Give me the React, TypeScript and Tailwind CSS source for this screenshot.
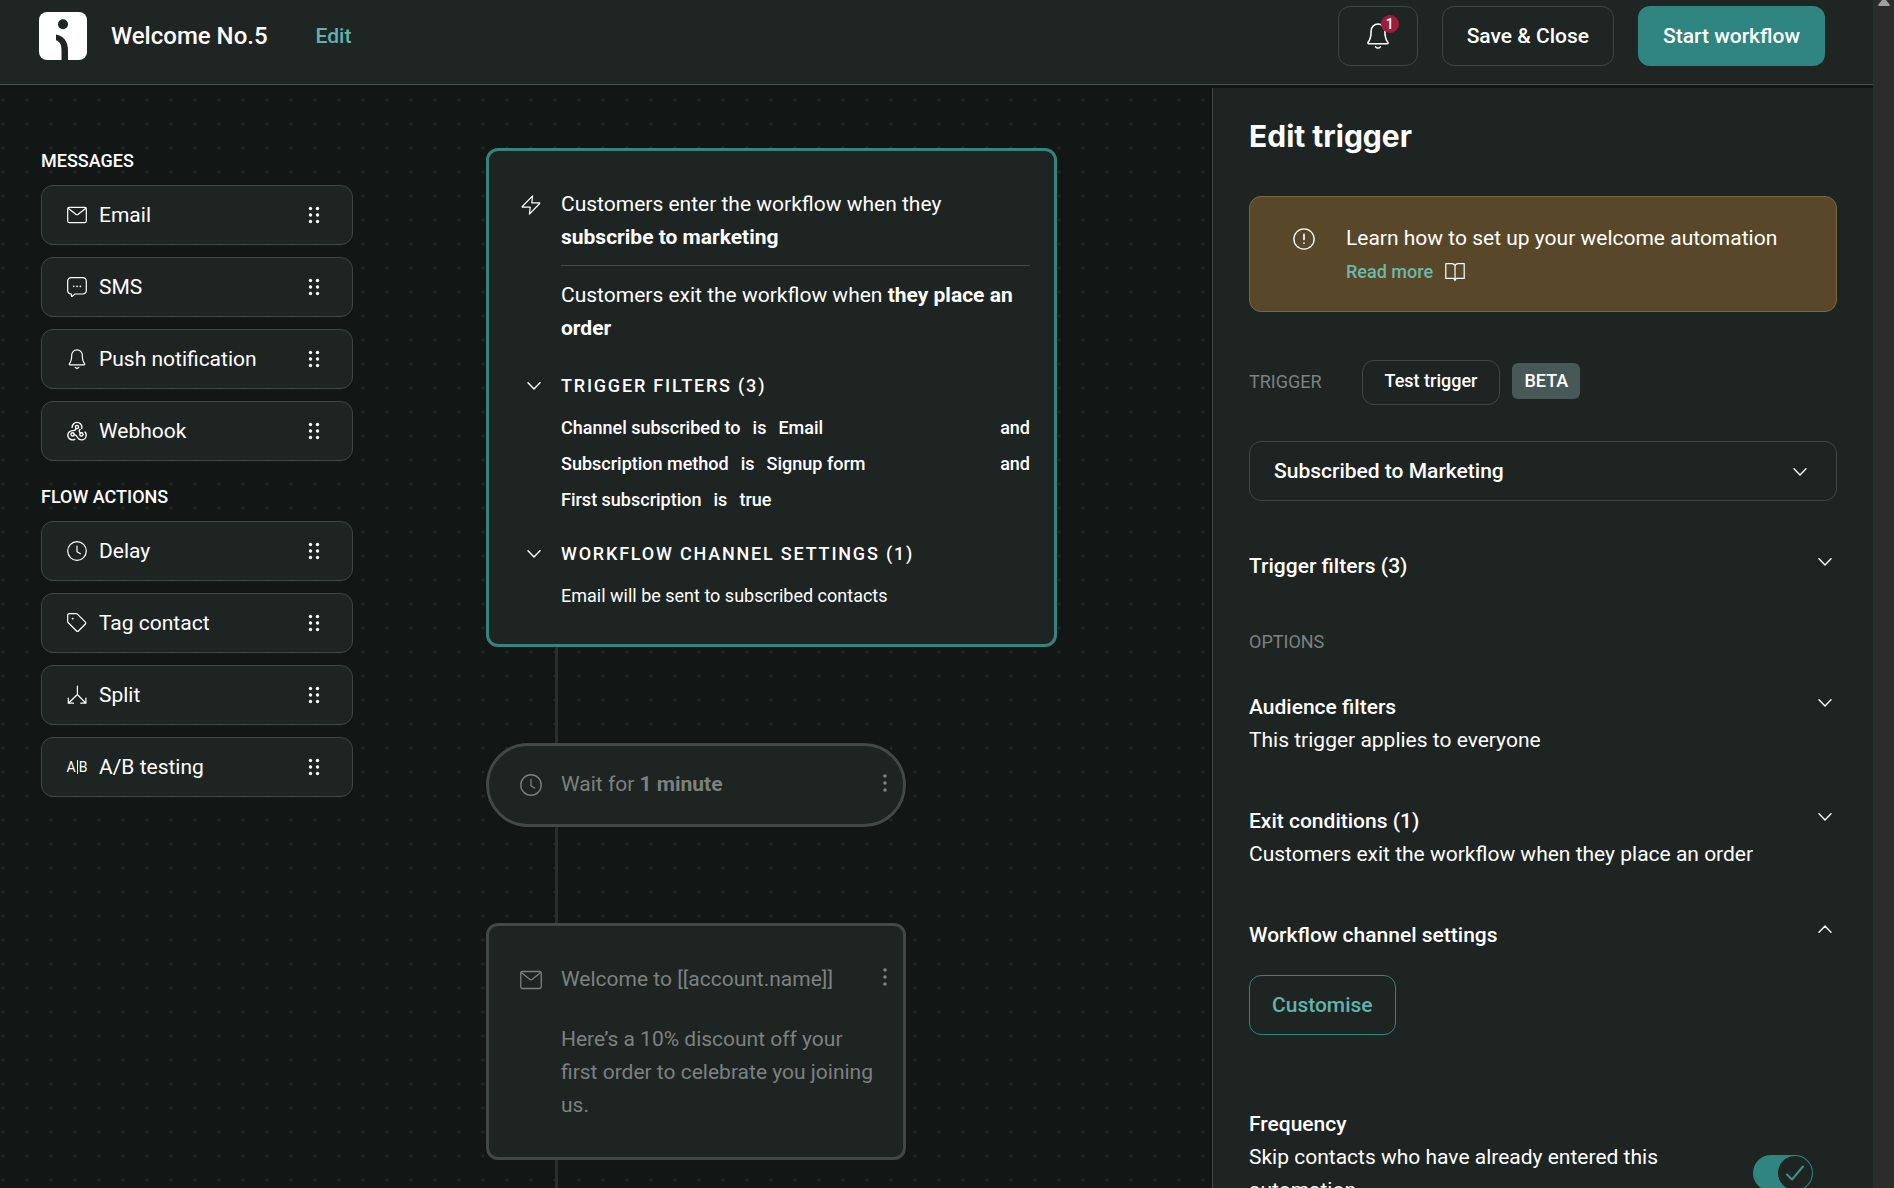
import type { ReactNode } from "react";

type IconProps = { className?: string };

function Svg({ className = "size-5", children }: IconProps & { children: ReactNode }) {
  return (
    <svg
      viewBox="0 0 20 20"
      className={`shrink-0 ${className}`}
      fill="none"
      stroke="currentColor"
      strokeWidth="1.2"
      strokeLinecap="round"
      strokeLinejoin="round"
      aria-hidden="true"
    >
      {children}
    </svg>
  );
}

const MailIcon = ({ className }: IconProps) => (
  <Svg className={className}>
    <rect x="0.7" y="2.3" width="18.6" height="15.4" rx="1.6" />
    <path d="M1.2 3.2l7.6 6.1a2 2 0 0 0 2.4 0l7.6-6.1" />
  </Svg>
);

const SmsIcon = ({ className }: IconProps) => (
  <Svg className={className}>
    <path d="M4 17A3.3 3.3 0 0 1 .7 13.700V4A3.300 3.300 0 0 1 4 .700h12A3.300 3.300 0 0 1 19.300 4v9.700a3.300 3.300 0 0 1-3.300 3.300H8L5.200 19.400c-.3.200-.7.100-.7-.300L4.300 17z" />
    <path d="M6.700 9.300h.1M10 9.300h.1M13.300 9.300h.1" strokeWidth="1.700" />
  </Svg>
);

const BellIcon = ({ className }: IconProps) => (
  <Svg className={className}>
    <path d="M10 .8a5.300 5.300 0 0 0-5.300 5.300c0 4.700-.7 6.800-2.200 8.500-.5.600-.2 1.300.5 1.300h14c.7 0 1-.7.5-1.300-1.500-1.700-2.200-3.800-2.200-8.500A5.300 5.300 0 0 0 10 .8z" />
    <path d="M8.200 18.300c.4.700 1 1 1.800 1s1.400-.3 1.800-1" />
  </Svg>
);

const WebhookIcon = ({ className }: IconProps) => (
  <Svg className={className}>
    <g strokeWidth="1.4">
      <circle cx="10" cy="6" r="1.600" />
      <circle cx="5.600" cy="13.400" r="1.600" />
      <circle cx="14.400" cy="13.400" r="1.600" />
      <path d="M5.100 6.400A4.900 4.900 0 0 1 14.900 6.200c0 .5-.1 1-.2 1.400M9.200 7.400c-.3 1.800-1.600 2.300-3.500 2.200A4.700 4.700 0 0 0 .8 14.300a4.700 4.700 0 0 0 4.900 4.600c.8 0 1.500-.2 2.100-.5M7.200 13.600c2.300.2 2.400 1.500 3.400 3.100 1 1.500 2.400 2.200 4 2.200a4.700 4.700 0 0 0 4.600-4.700c0-1.200-.4-2.300-1.200-3.100M13.500 12c-1.500-1-1.600-2.100-.5-3.600" />
    </g>
  </Svg>
);

const ClockIcon = ({ className }: IconProps) => (
  <Svg className={className}>
    <circle cx="10" cy="10" r="9.300" />
    <path d="M10 5v5.800l3.400 1.900" />
  </Svg>
);

const TagIcon = ({ className }: IconProps) => (
  <Svg className={className}>
    <path d="M.7 2A1.300 1.300 0 0 1 2 .7h7.200c.5 0 .9.200 1.200.5l8 8c.5.500.5 1.300 0 1.800l-7 7c-.5.500-1.300.5-1.800 0l-8.300-8.200A2 2 0 0 1 .7 8.500z" />
    <path d="M5.600 5.600h.1" strokeWidth="1.900" />
  </Svg>
);

const SplitIcon = ({ className }: IconProps) => (
  <Svg className={className}>
    <path d="M10.400 1v8.500L1.600 18M10.400 9.500l8.200 8.500M1.300 13v5.200h5.200M18.900 13v5.200h-5.200" />
  </Svg>
);

const ZapIcon = ({ className }: IconProps) => (
  <Svg className={className}>
    <path d="M11.600.8L1.300 11.500c-.3.300-.1.700.3.700h7.600l-.8 7L18.700 8.500c.3-.3.100-.7-.3-.7h-7.600z" />
  </Svg>
);

const AlertIcon = ({ className }: IconProps) => (
  <Svg className={className}>
    <circle cx="10" cy="10" r="9.200" />
    <path d="M10 5.800v4.700M10 13.700v.1" strokeWidth="1.500" />
  </Svg>
);

const BookIcon = ({ className }: IconProps) => (
  <Svg className={className}>
    <path d="M10 3.500C9.300 2 8 1.600 6.800 1.600H.8v14.800H8c1.100 0 2 .9 2 2.200 0-1.300.9-2.200 2-2.200h7.200V1.600h-6C12 1.600 10.700 2 10 3.500zM10 3.500v15" />
  </Svg>
);

const ChevronIcon = ({ className = "" }: IconProps) => (
  <svg
    viewBox="0 0 14 8"
    className={`h-2 w-3.5 shrink-0 ${className}`}
    fill="none"
    stroke="currentColor"
    strokeWidth="1.400"
    strokeLinecap="round"
    strokeLinejoin="round"
    aria-hidden="true"
  >
    <path d="M1 .8l6 6.200L13 .8" />
  </svg>
);

const AbIcon = () => (
  <span aria-hidden="true" className="flex w-5 shrink-0 items-center justify-center gap-px text-sm leading-5">
    A<span className="h-3.5 w-px shrink-0 bg-white" />B
  </span>
);

const GripIcon = () => (
  <svg viewBox="0 0 12 18" className="h-[18px] w-3 shrink-0" fill="currentColor" aria-hidden="true">
    {[2.500, 9, 15.500].map((y) => (
      <g key={y}>
        <circle cx="2.500" cy={y} r="1.700" />
        <circle cx="9.500" cy={y} r="1.700" />
      </g>
    ))}
  </svg>
);

const KebabButton = ({ label }: { label: string }) => (
  <button type="button" aria-label={label} className="mb-1 flex h-7 w-4 shrink-0 items-center justify-center">
    <svg viewBox="0 0 4 18" className="h-[18px] w-1" fill="currentColor" aria-hidden="true">
      <circle cx="2" cy="2" r="1.800" />
      <circle cx="2" cy="9" r="1.800" />
      <circle cx="2" cy="16" r="1.800" />
    </svg>
  </button>
);

const messages = [
  { label: "Email", icon: <MailIcon /> },
  { label: "SMS", icon: <SmsIcon /> },
  { label: "Push notification", icon: <BellIcon /> },
  { label: "Webhook", icon: <WebhookIcon /> },
];

const flowActions = [
  { label: "Delay", icon: <ClockIcon /> },
  { label: "Tag contact", icon: <TagIcon /> },
  { label: "Split", icon: <SplitIcon /> },
  { label: "A/B testing", icon: <AbIcon /> },
];

function PaletteGroup({ title, items }: { title: string; items: { label: string; icon: ReactNode }[] }) {
  return (
    <section>
      <h2 className="text-lg leading-6 font-medium">{title}</h2>
      <ul className="mt-3 flex flex-col gap-3">
        {items.map((item) => (
          <li key={item.label}>
            <button
              type="button"
              className="flex h-[60px] w-full items-center rounded-xl border border-[#3f4644] bg-[#1e2422] pr-8 pl-[25px] text-[21px]"
            >
              {item.icon}
              <span className="ml-3 flex-1 pt-0.5 text-left">{item.label}</span>
              <GripIcon />
            </button>
          </li>
        ))}
      </ul>
    </section>
  );
}

function Header() {
  return (
    <header className="flex h-[85px] shrink-0 items-start border-b border-[#48504d] bg-[#1f2523] pt-1.5 pr-12 pl-[39px]">
      <div className="flex h-[60px] items-center">
        <svg viewBox="0 0 48 48" className="size-12" role="img" aria-label="Omnisend">
          <rect width="48" height="48" rx="8" fill="#fff" />
          <circle cx="24" cy="12.300" r="5" fill="#1f2523" />
          <path d="M17 22.500c7.500 1.300 12 7 12 15.500v10h-6.500V38c0-5-1.500-8.500-5.500-9.800z" fill="#1f2523" />
        </svg>
        <h1 className="ml-6 text-2xl font-medium">Welcome No.5</h1>
        <a href="#edit" className="ml-12 pt-0.5 text-[21px] font-medium text-[#62b3ad]">
          Edit
        </a>
      </div>
      <div className="ml-auto flex gap-6 text-[21px] font-medium">
        <button
          type="button"
          aria-label="Notifications, 1 unread"
          className="relative flex h-[60px] w-20 items-center justify-center rounded-xl border border-[#3f4644]"
        >
          <BellIcon className="size-[26px]" />
          <span className="absolute top-2 right-[18px] flex size-[18px] items-center justify-center rounded-full bg-[#a01c3c] text-sm font-medium">
            1
          </span>
        </button>
        <button type="button" className="h-[60px] rounded-xl border border-[#3f4644] px-6 pt-0.5">
          Save &amp; Close
        </button>
        <button type="button" className="h-[60px] rounded-xl bg-[#2f857f] px-[25px] pt-0.5">
          Start workflow
        </button>
      </div>
    </header>
  );
}

const filters = [
  { field: "Channel subscribed to", value: "Email", joiner: "and" },
  { field: "Subscription method", value: "Signup form", joiner: "and" },
  { field: "First subscription", value: "true", joiner: "" },
];

function CardHeading({ children }: { children: ReactNode }) {
  return (
    <button type="button" className="flex h-9 items-center text-lg font-medium tracking-widest">
      <span className="flex w-10 pl-1.5">
        <ChevronIcon />
      </span>
      {children}
    </button>
  );
}

const Connector = ({ className }: { className: string }) => (
  <div className={`ml-[69px] w-[3px] bg-[#282e2c] ${className}`} />
);

function Workflow() {
  return (
    <main className="flex min-w-0 flex-1 flex-col overflow-hidden">
      <article className="w-[571px] shrink-0 rounded-xl border-3 border-[#35837d] bg-[#1e2422] pt-[37px] pr-6 pb-[30px] pl-8 text-[21px] leading-[33px]">
        <div className="flex">
          <ZapIcon className="mt-[7px] mr-5 size-5" />
          <div className="flex-1">
            <p>
              Customers enter the workflow when they <strong className="font-bold">subscribe to marketing</strong>
            </p>
            <hr className="mt-[11px] mb-[13px] border-[#444b49]" />
            <p>
              Customers exit the workflow when <strong className="font-bold">they place an order</strong>
            </p>
          </div>
        </div>
        <div className="mt-[23px]">
          <CardHeading>TRIGGER FILTERS (3)</CardHeading>
          <ul className="mt-1.5 ml-10 text-lg leading-9 font-medium">
            {filters.map((f) => (
              <li key={f.field} className="flex gap-3">
                <span>{f.field}</span>
                <span>is</span>
                <span>{f.value}</span>
                <span className="ml-auto">{f.joiner}</span>
              </li>
            ))}
          </ul>
        </div>
        <div className="mt-[18px]">
          <CardHeading>WORKFLOW CHANNEL SETTINGS (1)</CardHeading>
          <p className="mt-1.5 ml-10 text-lg leading-9">Email will be sent to subscribed contacts</p>
        </div>
      </article>

      <Connector className="h-24 shrink-0" />

      <article className="flex h-[84px] w-[420px] shrink-0 items-center rounded-full border-3 border-[#424846] bg-[#1e2422] pr-2.5 pl-[31px] text-[21px] text-[#7c8180]">
        <ClockIcon className="mr-[19px] size-[22px]" />
        <p className="flex-1">
          Wait for <strong className="font-bold">1 minute</strong>
        </p>
        <KebabButton label="Delay options" />
      </article>

      <Connector className="h-24 shrink-0" />

      <article className="flex w-[420px] shrink-0 items-start rounded-xl border-3 border-[#424846] bg-[#1e2422] pt-[37px] pr-2.5 pb-[35px] pl-[31px] text-[21px] leading-[33px] text-[#7c8180]">
        <MailIcon className="mt-1.5 mr-[19px] size-[22px]" />
        <div className="flex-1">
          <h3>Welcome to [[account.name]]</h3>
          <p className="mt-[27px] -mr-1">Here’s a 10% discount off your first order to celebrate you joining us.</p>
        </div>
        <KebabButton label="Email options" />
      </article>

      <Connector className="min-h-7 flex-1" />
    </main>
  );
}

function PanelRow({ title, detail, open = false }: { title: string; detail?: string; open?: boolean }) {
  return (
    <section>
      <button type="button" aria-expanded={open} className="flex w-full items-start justify-between pr-[5px] text-left font-medium">
        {title}
        <ChevronIcon className={open ? "mt-1.5 rotate-180" : "mt-2"} />
      </button>
      {detail && <p>{detail}</p>}
    </section>
  );
}

function TriggerPanel() {
  return (
    <aside className="mt-[3px] w-[661px] shrink-0 overflow-hidden border-l border-[#3f4644] bg-[#1e2422] pt-[30px] pr-9 pl-9 text-[21px] leading-[33px]">
      <h2 className="font-[Inter] text-[30px] leading-9 font-bold">Edit trigger</h2>

      <div className="mt-[42px] flex h-[116px] items-start rounded-xl border border-[#7a6740] bg-[#584829] pt-[25px] pl-[43px]">
        <AlertIcon className="mt-1.5 mr-[31px] size-[22px]" />
        <div>
          <p>Learn how to set up your welcome automation</p>
          <a href="#guide" className="flex items-center gap-3 text-lg leading-[33px] font-medium text-[#6cb8ac]">
            Read more
            <BookIcon className="size-5 text-white" />
          </a>
        </div>
      </div>

      <div className="mt-12 flex h-[45px] items-center">
        <span className="mr-10 mb-0.5 text-lg text-[#7c8280]">TRIGGER</span>
        <button type="button" className="h-[45px] rounded-xl border border-[#3f4644] px-[22px] pb-1 text-lg font-medium">
          Test trigger
        </button>
        <span className="mb-1 ml-3 flex h-9 items-center rounded-md bg-[#475856] px-3 text-lg font-medium">BETA</span>
      </div>

      <div className="relative mt-9">
        <select
          aria-label="Trigger"
          className="h-[60px] w-full appearance-none rounded-xl border border-[#3f4644] bg-[#1e2422] px-6 font-medium"
        >
          <option>Subscribed to Marketing</option>
        </select>
        <ChevronIcon className="pointer-events-none absolute top-[27px] right-[30px]" />
      </div>

      <div className="mt-[49px]">
        <PanelRow title="Trigger filters (3)" />
      </div>
      <h3 className="mt-[42px] text-lg leading-[33px] text-[#7c8280]">OPTIONS</h3>
      <div className="mt-[33px] flex flex-col gap-12">
        <PanelRow title="Audience filters" detail="This trigger applies to everyone" />
        <PanelRow title="Exit conditions (1)" detail="Customers exit the workflow when they place an order" />
        <PanelRow title="Workflow channel settings" open />
      </div>
      <button type="button" className="mt-[23px] h-[60px] rounded-xl border border-[#2f857f] px-[22px] font-medium text-[#62b3ad]">
        Customise
      </button>

      <section className="mt-[73px]">
        <h3 className="font-medium">Frequency</h3>
        <div className="flex items-start justify-between pr-6">
          <label htmlFor="skip-contacts" className="w-[440px]">
            Skip contacts who have already entered this automation.
          </label>
          <label className="relative mt-3.5 block h-9 w-[60px] rounded-full bg-[#2f857f]">
            <input id="skip-contacts" type="checkbox" defaultChecked className="sr-only" />
            <span className="absolute top-px right-px flex size-[34px] items-center justify-center rounded-full bg-[#1e2422]">
              <svg viewBox="0 0 20 20" className="size-5" fill="none" stroke="#3b918b" strokeWidth="2" strokeLinecap="round" strokeLinejoin="round" aria-hidden="true">
                <path d="M2 11.500l5 5L18 3.500" />
              </svg>
            </span>
          </label>
        </div>
      </section>
    </aside>
  );
}

export default function App() {
  return (
    <div className="flex h-screen overflow-hidden bg-[#121716] font-[Roboto,sans-serif] text-white">
      <div className="flex min-w-0 flex-1 flex-col">
        <Header />
        <div className="flex min-h-0 flex-1 bg-[radial-gradient(circle,#222827_1px,transparent_2px)] bg-[length:24px_24px] bg-[position:15px_3px]">
          <nav aria-label="Workflow blocks" className="mr-[133px] ml-[41px] flex w-[312px] shrink-0 flex-col gap-6 pt-16">
            <PaletteGroup title="MESSAGES" items={messages} />
            <PaletteGroup title="FLOW ACTIONS" items={flowActions} />
          </nav>
          <div className="flex min-w-0 flex-1 pt-[63px]">
            <Workflow />
          </div>
          <TriggerPanel />
        </div>
      </div>
      <div aria-hidden="true" className="flex w-[21px] shrink-0 justify-center bg-[#2c2c2c]">
        <svg viewBox="0 0 12 6" className="h-1.5 w-3" fill="#9f9f9f">
          <path d="M4 0h4l3.600 4.600c.4.600.1 1.400-.6 1.400H1C.3 6 0 5.200.4 4.600z" />
        </svg>
      </div>
    </div>
  );
}
